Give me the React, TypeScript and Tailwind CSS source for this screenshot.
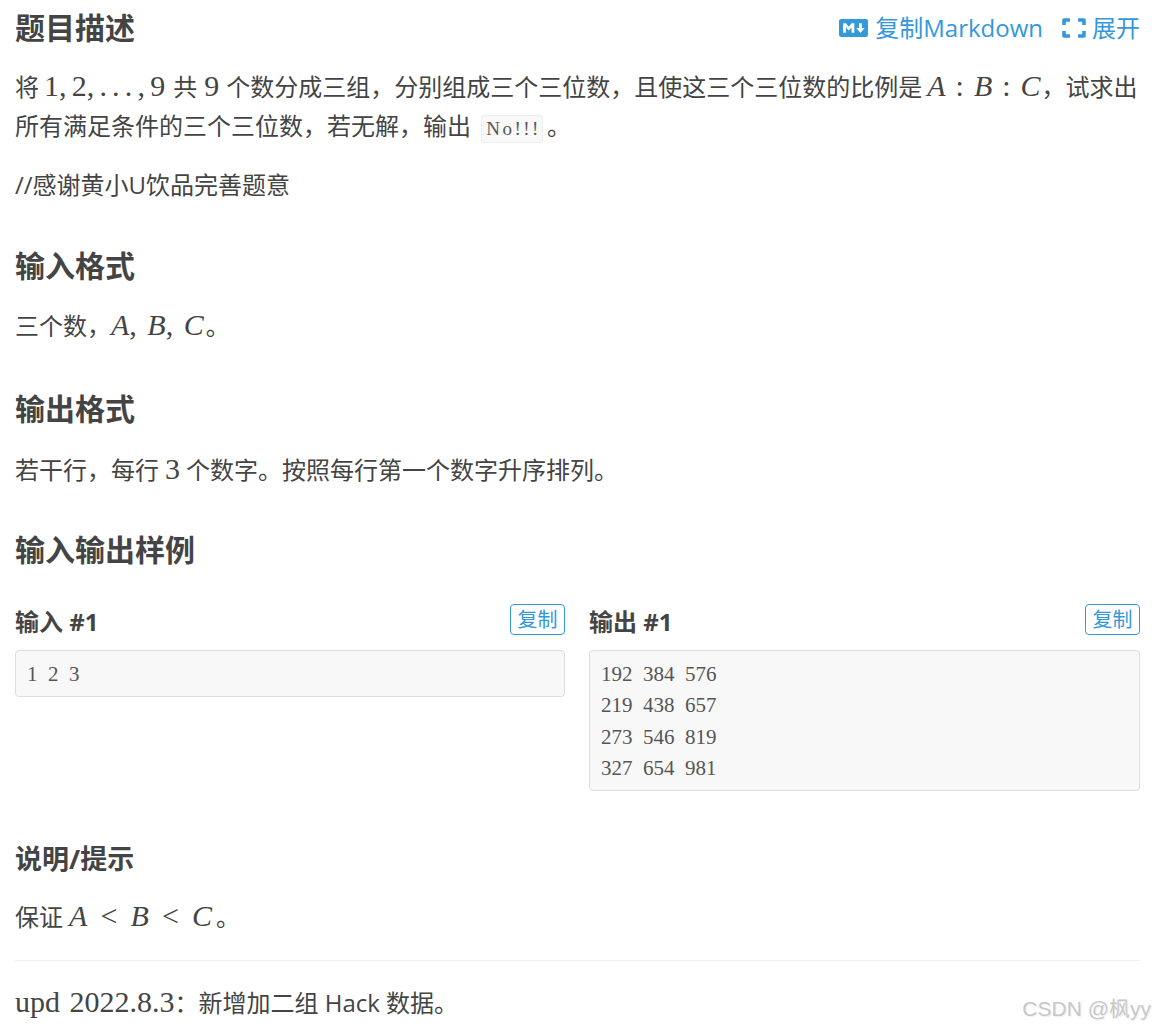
import React from 'react';
import { FaMarkdown } from 'react-icons/fa';

const Heading: React.FC<{ children: React.ReactNode; className?: string }> = ({ children, className }) => (
  <h2 className={`text-[30px] leading-[40px] font-bold ${className ?? ''}`}>{children}</h2>
);

const Para: React.FC<{ children: React.ReactNode; className?: string }> = ({ children, className }) => (
  <p className={`text-[24px] leading-[39px] ${className ?? ''}`}>{children}</p>
);

const Tex: React.FC<{ children: React.ReactNode; className?: string }> = ({ children, className }) => (
  <span className={`font-['Liberation_Serif',serif] text-[30px] leading-[30px] ${className ?? ''}`}>{children}</span>
);

const V: React.FC<{ children: React.ReactNode }> = ({ children }) => <i className="italic">{children}</i>;

const Sample: React.FC<{ title: string; lines: string[] }> = ({ title, lines }) => (
  <div className="min-w-0">
    <div className="flex items-start justify-between h-[32px] mb-[14px]">
      <h3 className="text-[24px] leading-[36px] font-bold">{title}</h3>
      <button className="w-[55px] h-[31px] border border-[#3498db] rounded-[4px] text-[#3498db] text-[20px] leading-[28px]">复制</button>
    </div>
    <pre className="bg-[#f8f8f8] border border-[#dddddd] rounded-[4px] px-[11px] pt-[8px] pb-[5.5px] font-['Liberation_Serif',serif] text-[21px] leading-[31.4px] [word-spacing:5.25px] text-[#555555]">
      {lines.join('\n')}
    </pre>
  </div>
);

export default function App() {
  return (
    <div className="relative w-[1154px] h-[1028px] overflow-hidden bg-white pl-[15px] pr-[14px] text-[#444444] font-['Open_Sans','Noto_Sans_CJK_SC',sans-serif]">
      <div className="flex items-center justify-between pt-[8px]">
        <Heading>题目描述</Heading>
        <div className="flex items-center text-[#3498db] text-[24px] leading-[40px]">
          <FaMarkdown className="w-[29px] h-[30px] mr-[7px]" />
          <span>复制Markdown</span>
          <svg viewBox="0 0 24 20" className="w-[24px] h-[20px] ml-[19px] mr-[6px]" fill="none" stroke="currentColor" strokeWidth="3.6" strokeLinejoin="round">
            <path d="M2 7V2h6M16 2h6v5M22 13v5h-6M8 18H2v-5" />
          </svg>
          <span>展开</span>
        </div>
      </div>

      <Para className="mt-[19px]">
        将<Tex className="ml-[5px] mr-[8px] [word-spacing:-2.3px]">1, 2, . . . , 9</Tex>共<Tex className="mx-[7px]">9</Tex>个数分成三组，分别组成三个三位数，且使这三个三位数的比例是<Tex className="ml-[5px] mr-[1px] [word-spacing:2.5px]"><V>A</V> : <V>B</V> : <V>C</V></Tex>，试求出
        <br />
        所有满足条件的三个三位数，若无解，输出{' '}
        <code className="inline-block bg-[#f8f8f8] border border-[#eeeeee] rounded-[3px] pl-[4px] pr-[1px] font-['Liberation_Serif',serif] text-[19px] tracking-[2.5px] leading-[26px] mx-[4px] text-[#555555]">No!!!</code>
        。
      </Para>
      <Para className="mt-[20px]">//感谢黄小U饮品完善题意</Para>

      <Heading className="mt-[42px]">输入格式</Heading>
      <Para className="mt-[20px]">三个数，<Tex className="mr-[2px] [word-spacing:3px]"><V>A</V>, <V>B</V>, <V>C</V></Tex>。</Para>

      <Heading className="mt-[44px]">输出格式</Heading>
      <Para className="mt-[21px]">若干行，每行<Tex className="mx-[6px]">3</Tex>个数字。按照每行第一个数字升序排列。</Para>

      <Heading className="mt-[41px]">输入输出样例</Heading>

      <div className="grid grid-cols-[550px_551px] items-start gap-[24px] mt-[34px]">
        <Sample title="输入 #1" lines={['1 2 3']} />
        <Sample title="输出 #1" lines={['192 384 576', '219 438 657', '273 546 819', '327 654 981']} />
      </div>

      <h3 className="text-[27px] leading-[40px] font-bold mt-[48px]">说明/提示</h3>
      <Para className="mt-[18px]">保证<Tex className="ml-[6px] mr-[4px] [word-spacing:5.6px]"><V>A</V> &lt; <V>B</V> &lt; <V>C</V></Tex>。</Para>

      <hr className="border-0 border-t border-[#eeeeee] mt-[24px]" />

      <Para className="mt-[22px]">
        <Tex className="[word-spacing:2px]">upd 2022.8.3</Tex>：新增加二组 Hack 数据。
      </Para>

      <div className="absolute right-[3px] bottom-[5px] text-[21px] leading-[28px] text-[#c8c8c8] [text-shadow:1px_1px_1px_#eeeeee] font-['Liberation_Sans','Noto_Sans_CJK_SC',sans-serif]">
        CSDN @枫yy
      </div>
    </div>
  );
}
